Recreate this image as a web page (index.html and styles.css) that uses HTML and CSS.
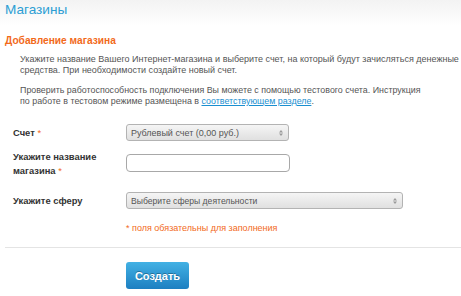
FILE: index.html
```html
<!DOCTYPE html>
<html lang="ru">
<head>
    <meta charset="UTF-8">
    <title>Магазины</title>
    <link rel="stylesheet" href="styles.css">
</head>
<body>
    <div class="page-head">
        <h1>Магазины</h1>
    </div>

    <div class="content">
        <h2>Добавление магазина</h2>

        <div class="intro">
            <p>Укажите название Вашего Интернет-магазина и выберите счет, на который будут зачисляться денежные<br>средства. При необходимости создайте новый счет.</p>
            <p class="test-info">Проверить работоспособность подключения Вы можете с помощью тестового счета. Инструкция<br>по работе в тестовом режиме размещена в <a href="#">соответствующем разделе</a>.</p>
        </div>

        <form class="shop-form">
            <div class="row row-center">
                <label>Счет <span class="req">*</span></label>
                <div class="select short">
                    <span>Рублевый счет (0,00 руб.)</span>
                    <svg class="arrows" width="4" height="6" viewBox="0 0 4 6"><path d="M0 2.5 L2 0 L4 2.5 Z M0 3.5 L2 6 L4 3.5 Z" fill="#999"/></svg>
                </div>
            </div>

            <div class="row row-name">
                <label for="shopName">Укажите название<br>магазина <span class="req">*</span></label>
                <input type="text" id="shopName" class="text-input">
            </div>

            <div class="row row-center">
                <label>Укажите сферу</label>
                <div class="select wide">
                    <span class="placeholder">Выберите сферы деятельности</span>
                    <svg class="arrows" width="4" height="6" viewBox="0 0 4 6"><path d="M0 2.5 L2 0 L4 2.5 Z M0 3.5 L2 6 L4 3.5 Z" fill="#999"/></svg>
                </div>
            </div>

            <p class="note">* поля обязательны для заполнения</p>

            <div class="actions">
                <button type="submit">Создать</button>
            </div>
        </form>
    </div>
</body>
</html>
```

FILE: styles.css
```css
body {
    margin: 0;
    font-family: "Liberation Sans", Arial, sans-serif;
    font-size: 9px;
    color: #555;
    background: #fff;
}

.page-head {
    height: 26px;
    padding-left: 5px;
    background: linear-gradient(to bottom, #f3f3f3, #fff);
}

.page-head h1 {
    margin: 0;
    font-size: 13.6px;
    font-weight: normal;
    color: #2c9ed4;
    line-height: 19px;
}

.content {
    padding: 8px 0 0 5px;
}

h2 {
    margin: 0;
    font-size: 10.2px;
    font-weight: bold;
    color: #f26a1b;
    line-height: 14px;
}

.intro {
    padding: 6px 0 0 15px;
}

.intro p {
    margin: 0 0 9px;
    line-height: 11px;
    white-space: nowrap;
}

.intro .test-info {
    margin-bottom: 0;
    font-size: 8.9px;
}

.intro a {
    color: #1a8fd0;
}

.shop-form {
    padding-top: 17px;
}

.row {
    display: grid;
    grid-template-columns: 113px auto;
    align-items: start;
    margin-left: 8px;
    margin-bottom: 9px;
}

.row-center {
    align-items: center;
}

.row-name {
    margin-bottom: 14px;
}

.row label {
    color: #333;
    font-size: 9.4px;
    font-weight: bold;
    line-height: 14px;
}

.req {
    color: #f26a1b;
    font-weight: normal;
}

.select {
    display: flex;
    justify-content: space-between;
    align-items: center;
    box-sizing: border-box;
    height: 17px;
    padding: 0 5px 0 4px;
    border: 1px solid #b3b3b3;
    border-radius: 3px;
    background: linear-gradient(to bottom, #f5f5f5, #e0e0e0);
    color: #555;
    font-size: 9px;
}

.select.short {
    width: 163px;
}

.select.wide {
    width: 277px;
}

.placeholder {
    font-size: 8.6px;
}

.text-input {
    box-sizing: border-box;
    width: 164px;
    height: 18px;
    margin-top: 4px;
    border: 1px solid #a8a8a8;
    border-radius: 4px;
    background: #fff;
}

.note {
    margin: 13px 0 13px 121px;
    line-height: 12px;
    color: #f26a1b;
    font-size: 9px;
}

.actions {
    border-top: 1px solid #e4e4e4;
    padding: 14px 0 0 121px;
}

button {
    width: 63px;
    height: 27px;
    border: none;
    border-radius: 3px;
    background: linear-gradient(to bottom, #42b1e4, #1d7fc1);
    color: #fff;
    font-family: "Liberation Sans", Arial, sans-serif;
    font-size: 11px;
    font-weight: bold;
    text-shadow: 0 -1px 0 rgba(0,0,0,0.3);
    cursor: pointer;
}
```
